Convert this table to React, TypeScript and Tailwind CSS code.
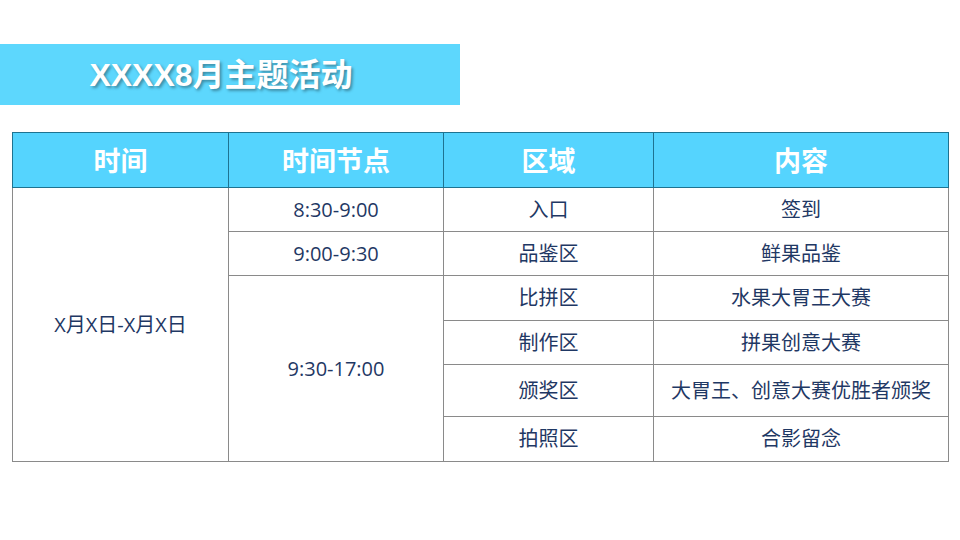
import React from "react";

const font = { fontFamily: '"Open Sans", "Noto Sans CJK SC", sans-serif' };

const HEADERS = ["时间", "时间节点", "区域", "内容"];

const ROWS = [
  { area: "入口", content: "签到", h: "h-[44px]" },
  { area: "品鉴区", content: "鲜果品鉴", h: "h-[44px]" },
  { area: "比拼区", content: "水果大胃王大赛", h: "h-[45px]" },
  { area: "制作区", content: "拼果创意大赛", h: "h-[44px]" },
  { area: "颁奖区", content: "大胃王、创意大赛优胜者颁奖", h: "h-[52px]" },
  { area: "拍照区", content: "合影留念", h: "h-[45px]" },
];

export default function App() {
  const cell = "border border-[#8a8a8a] text-center align-middle text-[20px] text-[#1f3864] leading-none";

  return (
    <div className="w-[960px] h-[540px] bg-white overflow-hidden" style={font}>
      <div className="pt-[44px]">
        <div className="w-[460px] h-[61px] bg-[#5dd7fd] flex items-center justify-center pr-[18px]">
          <span className="text-white text-[32px] font-bold leading-none font-['Liberation_Sans','Noto_Sans_CJK_SC',sans-serif] [text-shadow:2px_2px_3px_rgba(0,0,0,0.35)]">
            XXXX8月主题活动
          </span>
        </div>
      </div>

      <div className="pl-[12px] pt-[27px]">
        <table className="border-collapse table-fixed w-[936px]">
          <colgroup>
            <col className="w-[216px]" />
            <col className="w-[215px]" />
            <col className="w-[210px]" />
            <col className="w-[295px]" />
          </colgroup>
          <thead>
            <tr className="h-[55px] bg-[#55d4fe]">
              {HEADERS.map((h) => (
                <th
                  key={h}
                  className="border border-[#1e7391] text-white text-[27px] font-bold leading-none"
                >
                  {h}
                </th>
              ))}
            </tr>
          </thead>
          <tbody>
            {ROWS.map((r, i) => (
              <tr key={r.area} className={r.h}>
                {i === 0 && (
                  <td rowSpan={6} className={cell}>
                    X月X日-X月X日
                  </td>
                )}
                {i === 0 && <td className={cell}>8:30-9:00</td>}
                {i === 1 && <td className={cell}>9:00-9:30</td>}
                {i === 2 && (
                  <td rowSpan={4} className={cell}>
                    9:30-17:00
                  </td>
                )}
                <td className={cell}>{r.area}</td>
                <td className={cell}>{r.content}</td>
              </tr>
            ))}
          </tbody>
        </table>
      </div>
    </div>
  );
}
